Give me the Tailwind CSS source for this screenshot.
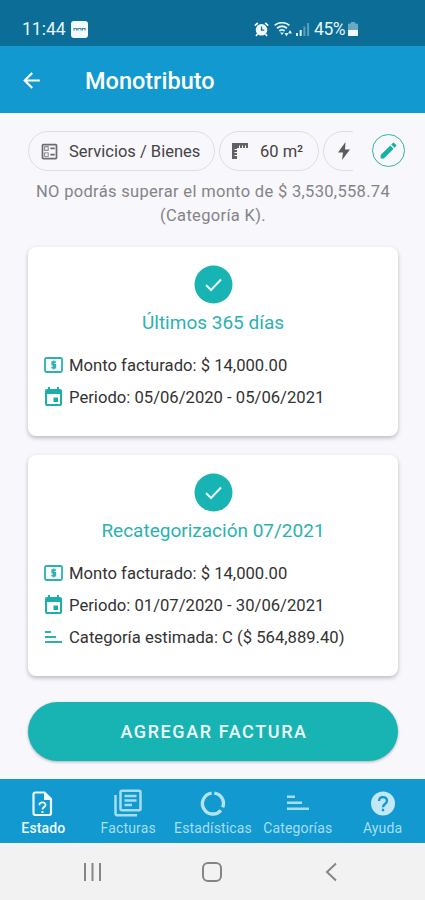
<!DOCTYPE html>
<html lang="es">

<head>
  <meta charset="UTF-8">
  <meta name="viewport" content="width=device-width, initial-scale=1.0">
  <title>Monotributo</title>
  <script src="https://cdn.jsdelivr.net/npm/@tailwindcss/browser@4"></script>
</head>

<body class="bg-[#f8f7fc] font-[Roboto,sans-serif] text-[#444]">
  <div class="w-[425px] h-[900px] flex flex-col overflow-hidden">

    <!-- Barra de estado -->
    <div class="h-[46px] shrink-0 bg-[#0c6d96] text-[#e6f6fb] flex items-center pl-[22px] pr-[67px] pt-3 text-[17.5px]">
      <span class="w-[44px] whitespace-nowrap">11:44</span>
      <svg class="ml-[5px] w-[17px] h-[17px]" viewBox="0 0 17 17">
        <rect width="17" height="17" rx="3" fill="#f4fbfe" />
        <path d="M3 9.500V7.500h2.500v2M7 9.500v-2h3v2M11.500 9.500v-2H14v2" fill="none" stroke="#4a8ba8" stroke-width="1.200" />
      </svg>
      <div class="ml-auto flex items-center">
        <svg class="w-[15px] h-[15px]" viewBox="0 0 15 15" fill="none" stroke="#f4fbfe">
          <circle cx="7.500" cy="7.800" r="5.800" fill="#f4fbfe" stroke="none" />
          <path d="M.8 3.600 3.800 1M14.200 3.600 11.200 1M3.500 12 2 14M11.500 12l1.500 2" stroke-width="1.700" />
          <path d="M7.500 4.500v3.600h2.800" stroke="#0c6d96" stroke-width="1.300" />
        </svg>
        <svg class="ml-[5px] w-[19px] h-[15px]" viewBox="0 0 19 15" fill="none" stroke="#d9eff7" stroke-width="1.800">
          <path d="M.6 3.400C5-.2 11-.2 15.400 3.400M3 6.300c3-2.500 7-2.500 10 0M5.300 9c1.700-1.400 3.700-1.400 5.400 0" />
          <path d="M6 10.500h4L8 13z" fill="#d9eff7" stroke="none" />
          <path d="m10.500 11 2 3.500 2-3.500zM14 11.500l2-3.500 2 3.500z" fill="#d9eff7" stroke="none" />
        </svg>
        <svg class="ml-[3px] w-[14px] h-[14px]" viewBox="0 0 14 14">
          <path d="M0 11h2v3H0zM3.700 8h2v6h-2z" fill="#d9eff7" />
          <path d="M7.400 4.500h2V14h-2zM11.100 1h2v13h-2z" fill="#5b9fbb" />
        </svg>
        <span class="ml-[4px] w-[34px] whitespace-nowrap tracking-[-0.400px]">45%</span>
        <svg class="w-[10px] h-[14px]" viewBox="0 0 10 14">
          <path d="M3 0h4v1.500h2a1 1 0 0 1 1 1V14H0V2.500a1 1 0 0 1 1-1h2z" fill="#6aa9c2" />
          <path d="M0 8h10v5a1 1 0 0 1-1 1H1a1 1 0 0 1-1-1z" fill="#f4fbfe" />
        </svg>
      </div>
    </div>

    <!-- Encabezado -->
    <header class="h-[67px] shrink-0 bg-[#1199d0] flex items-center pl-[19px] pt-[5px]">
      <svg class="w-[25px] h-[25px] -mt-[4px] fill-white" viewBox="0 0 24 24">
        <path d="M20 11H7.830l5.590-5.590L12 4l-8 8 8 8 1.410-1.410L7.830 13H20v-2z" />
      </svg>
      <h1 class="ml-[41px] text-white text-[23.500px] font-medium">Monotributo</h1>
    </header>

    <main class="h-[666px] shrink-0 px-[28px] pt-[18px] flex flex-col">
      <!-- Filtros -->
      <div class="flex items-center">
        <div class="w-[325px] shrink-0 flex gap-1 overflow-hidden text-[16.500px] whitespace-nowrap">
          <div class="w-[187px] h-[40px] shrink-0 rounded-full border border-[#dedde2] flex items-center pl-[10px]">
            <svg class="w-[21px] h-[21px]" viewBox="0 0 24 24" fill="#6d6d70">
              <path d="M13 7.500h5v2h-5zM13 14.500h5v2h-5zM19 3H5a2 2 0 0 0-2 2v14a2 2 0 0 0 2 2h14a2 2 0 0 0 2-2V5a2 2 0 0 0-2-2zm0 16H5V5h14v14zM11 6H6v5h5V6zm-1 4H7V7h3v3zM11 13H6v5h5v-5zm-1 4H7v-3h3v3z" />
            </svg>
            <span class="ml-[9px] pt-[2px]">Servicios / Bienes</span>
          </div>
          <div class="w-[100px] h-[40px] shrink-0 rounded-full border border-[#dedde2] flex items-center pl-[11px]">
            <svg class="w-[18px] h-[18px]" viewBox="0 0 18 18">
              <path d="M1 1h16v5h-2V3.500h-1V6h-2V3.500h-1V6H9V3.500H8V6H6v1H3.500v1H6v2H3.500v1H6v2H3.500v1H6v3H1z" fill="#626265" />
            </svg>
            <span class="ml-[11px] pt-[2px]">60 m²</span>
          </div>
          <div class="w-[100px] h-[40px] shrink-0 rounded-full border border-[#dedde2] flex items-center pl-[13px]">
            <svg class="w-[14px] h-[18px] fill-[#5b5b5e]" viewBox="0 0 14 18">
              <path d="M8.500 0 1 10.500h5L5 18l8-10.500H8z" />
            </svg>
          </div>
        </div>
        <div class="ml-[19px] -mt-[2px] w-[33px] h-[33px] shrink-0 rounded-full border-[1.500px] border-[#2fb3aa] flex items-center justify-center">
          <svg class="w-[21px] h-[21px] fill-[#17b0a4]" viewBox="0 0 24 24">
            <path d="M3 17.250V21h3.750L17.810 9.940l-3.750-3.750L3 17.250zM20.710 7.040a1 1 0 0 0 0-1.410l-2.340-2.340a1 1 0 0 0-1.410 0l-1.830 1.830 3.750 3.750 1.830-1.830z" />
          </svg>
        </div>
      </div>

      <p class="mt-[9px] -mx-2 pl-px text-center text-[16.500px] leading-[24px] tracking-[0.320px] text-[#848487]">
        NO podrás superar el monto de $ 3,530,558.74<br>(Categoría K).
      </p>

      <!-- Últimos 365 días -->
      <section class="mt-[19px] h-[189px] w-[370px] shrink-0 bg-white rounded-lg shadow-[0_2px_4px_rgba(0,0,0,0.25)] px-4 pt-[18px]">
        <svg class="block mx-auto w-[39px] h-[39px]" viewBox="0 0 39 39">
          <circle cx="19.500" cy="19.500" r="19" fill="#18b4b3" />
          <path d="m12 20 5 5 10-10.500" fill="none" stroke="#e9fbfb" stroke-width="2" />
        </svg>
        <h2 class="mt-[6px] text-center text-[19px] leading-[26px] text-[#2bb2ad]">Últimos 365 días</h2>
        <ul class="mt-[13px] text-[16.650px] leading-[32px] whitespace-nowrap text-[#333]">
          <li class="flex items-center h-[32px]">
            <svg class="w-[19px] h-[16px]" viewBox="0 0 19 16">
              <rect x="1" y="1" width="17" height="14" rx="1.500" fill="none" stroke="#2bb2ad" stroke-width="1.800" />
              <path d="M12 5H8.200v2.800h3.200v2.800H7.200M9.700 3.500v9" fill="none" stroke="#2bb2ad" stroke-width="1.600" />
            </svg>
            <span class="ml-[6px] pt-[2px]">Monto facturado: $ 14,000.00</span>
          </li>
          <li class="flex items-center h-[32px]">
            <svg class="w-[19px] h-[19px] -mt-[2px] fill-[#18b0a9]" viewBox="0 0 19 19">
              <path d="M4 0h2v2h7V0h2v2h1a2 2 0 0 1 2 2v13a2 2 0 0 1-2 2H3a2 2 0 0 1-2-2V4a2 2 0 0 1 2-2h1zM3 7v10h13V7zM9.500 10.500h4.500V15H9.500z" fill-rule="evenodd" />
            </svg>
            <span class="ml-[6px] pt-[2px]">Periodo: 05/06/2020 - 05/06/2021</span>
          </li>
        </ul>
      </section>

      <!-- Recategorización -->
      <section class="mt-[19px] h-[221px] w-[370px] shrink-0 bg-white rounded-lg shadow-[0_2px_4px_rgba(0,0,0,0.25)] px-4 pt-[18px]">
        <svg class="block mx-auto w-[39px] h-[39px]" viewBox="0 0 39 39">
          <circle cx="19.500" cy="19.500" r="19" fill="#18b4b3" />
          <path d="m12 20 5 5 10-10.500" fill="none" stroke="#e9fbfb" stroke-width="2" />
        </svg>
        <h2 class="mt-[6px] text-center text-[19px] leading-[26px] text-[#2bb2ad]">Recategorización 07/2021</h2>
        <ul class="mt-[13px] text-[16.650px] leading-[32px] whitespace-nowrap text-[#333]">
          <li class="flex items-center h-[32px]">
            <svg class="w-[19px] h-[16px]" viewBox="0 0 19 16">
              <rect x="1" y="1" width="17" height="14" rx="1.500" fill="none" stroke="#2bb2ad" stroke-width="1.800" />
              <path d="M12 5H8.200v2.800h3.200v2.800H7.200M9.700 3.500v9" fill="none" stroke="#2bb2ad" stroke-width="1.600" />
            </svg>
            <span class="ml-[6px] pt-[2px]">Monto facturado: $ 14,000.00</span>
          </li>
          <li class="flex items-center h-[32px]">
            <svg class="w-[19px] h-[19px] -mt-[2px] fill-[#18b0a9]" viewBox="0 0 19 19">
              <path d="M4 0h2v2h7V0h2v2h1a2 2 0 0 1 2 2v13a2 2 0 0 1-2 2H3a2 2 0 0 1-2-2V4a2 2 0 0 1 2-2h1zM3 7v10h13V7zM9.500 10.500h4.500V15H9.500z" fill-rule="evenodd" />
            </svg>
            <span class="ml-[6px] pt-[2px]">Periodo: 01/07/2020 - 30/06/2021</span>
          </li>
          <li class="flex items-center h-[32px]">
            <svg class="w-[19px] h-[14px] fill-[#2bb2ad]" viewBox="0 0 19 14">
              <path d="M1 1h6v2H1zM1 6h11v2H1zM1 11h17v2H1z" />
            </svg>
            <span class="ml-[6px] pt-[2px]">Categoría estimada: C ($ 564,889.40)</span>
          </li>
        </ul>
      </section>

      <button class="mt-[26px] h-[59px] w-[370px] shrink-0 rounded-full bg-[#18b4b3] text-[#effcfc] text-[18px] font-medium pl-[2px] tracking-[1.600px] shadow-[0_1px_3px_rgba(0,0,0,0.3)]">AGREGAR FACTURA</button>
    </main>

    <!-- Navegación -->
    <nav class="h-[64px] shrink-0 bg-[#1199d0] grid grid-cols-5 pl-px text-[14px] leading-[18px] tracking-[0.150px] text-[#a5def3] whitespace-nowrap">
      <a class="flex flex-col items-center pt-[10px] text-[#eefaff]">
        <svg class="w-[30px] h-[30px]" viewBox="0 0 30 30">
          <path d="M7.500 3.500h9l6.500 6.500v14a2 2 0 0 1-2 2H7.500a2 2 0 0 1-2-2v-18.500a2 2 0 0 1 2-2z" fill="none" stroke="currentColor" stroke-width="2.200" />
          <path d="M16 3l8 8h-8z" fill="currentColor" />
          <path d="M11.300 16.200c0-4 6.600-3.600 6.200 0-.3 2-3 2-3 4.300M14.500 22v2" fill="none" stroke="currentColor" stroke-width="1.900" />
        </svg>
        <span class="font-medium">Estado</span>
      </a>
      <a class="flex flex-col items-center pt-[10px]">
        <svg class="w-[30px] h-[30px]" viewBox="0 0 30 30" fill="none" stroke="currentColor" stroke-width="2.500">
          <rect x="7.500" y="1.800" width="20" height="19.500" rx="1.500" />
          <path d="M2.500 6v18.500a1.800 1.800 0 0 0 1.800 1.800H24M11.500 7h12M11.500 11.500h12M11.500 16h7.500" />
        </svg>
        <span>Facturas</span>
      </a>
      <a class="flex flex-col items-center pt-[10px]">
        <svg class="w-[30px] h-[30px]" viewBox="0 0 30 30" fill="none" stroke="#b5e3f5" stroke-width="3.400">
          <path d="M16.300 4.100a10.500 10.500 0 0 1 8.400 14.300M22.900 21.400a10.500 10.500 0 1 1-9.200-17.300" />
        </svg>
        <span>Estadísticas</span>
      </a>
      <a class="flex flex-col items-center pt-[10px]">
        <svg class="w-[30px] h-[30px] fill-current" viewBox="0 0 30 30">
          <path d="M4 6.500h8V9H4zM4 12.500h15V15H4zM4 18.500h22V21H4z" />
        </svg>
        <span>Categorías</span>
      </a>
      <a class="flex flex-col items-center pt-[10px]">
        <svg class="w-[30px] h-[30px]" viewBox="0 0 30 30">
          <circle cx="15" cy="14.500" r="12" fill="#c2e7f6" />
          <path d="M11 12c0-5.500 8-5 8-.3 0 3.300-4 3.300-4 6.500M15 19.700v2.500" fill="none" stroke="#1199d0" stroke-width="2.300" />
        </svg>
        <span>Ayuda</span>
      </a>
    </nav>

    <!-- Botones del sistema -->
    <div class="h-[57px] shrink-0 bg-[#f2f2f2] flex items-center pl-[82px]">
      <svg class="w-[20px] h-[20px]" viewBox="0 0 20 20" stroke="#858585" stroke-width="2">
        <path d="M3 1v18M10.500 1v18M18 1v18" />
      </svg>
      <svg class="ml-[100px] w-[20px] h-[20px]" viewBox="0 0 20 20" fill="none" stroke="#858585" stroke-width="2">
        <rect x="1" y="1" width="18" height="18" rx="5" />
      </svg>
      <svg class="ml-[103px] w-[12px] h-[20px]" viewBox="0 0 12 20" fill="none" stroke="#858585" stroke-width="2">
        <path d="M11 1.500 2 10l9 8.500" />
      </svg>
    </div>

  </div>
</body>

</html>
